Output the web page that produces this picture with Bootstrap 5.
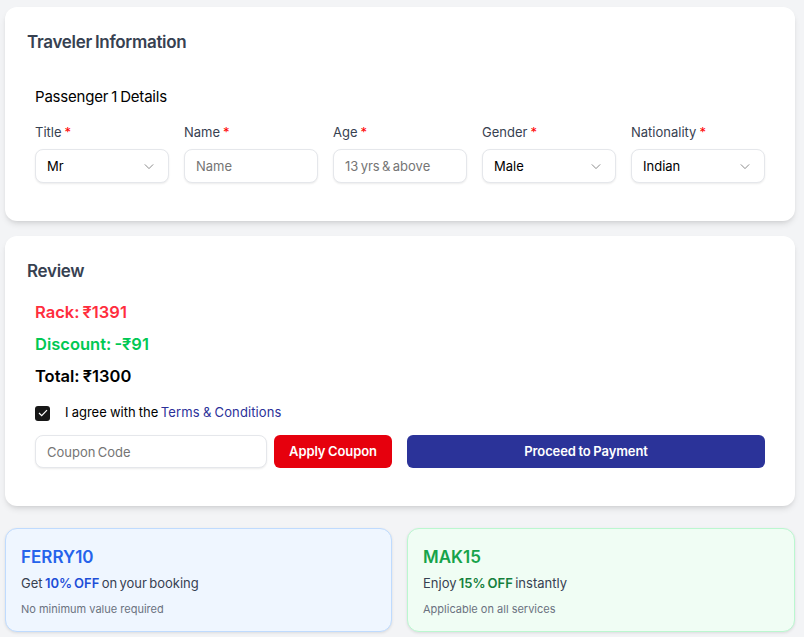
<!DOCTYPE html>
<html lang="en">
<head>
<meta charset="utf-8">
<title>Booking</title>
<link href="https://cdn.jsdelivr.net/npm/bootstrap@5.3.0/dist/css/bootstrap.min.css" rel="stylesheet">
<style>
html,body{height:637px;overflow:hidden}
body{background:#f3f4f6;font-family:Inter,"Noto Sans",sans-serif;color:#000;padding:7px 9px 0 5px}
.panel{background:#fff;border-radius:12px;box-shadow:0 4px 6px -1px rgba(0,0,0,.1),0 2px 4px -2px rgba(0,0,0,.1)}
.panel-a{height:214px;padding:24px 30px 0 22px;margin-bottom:15px}
.panel-b{height:270px;padding:24px 30px 0 22px;margin-bottom:22px}
.panel-title{font-size:17px;font-weight:600;color:#374151;line-height:22px;margin:0;letter-spacing:-.3px;word-spacing:-1px}
.sub-block{padding-left:8px}
.passenger{font-size:15px;line-height:20px;margin:34px 0 16px;letter-spacing:-.2px;word-spacing:-1px}
.field-grid{display:grid;grid-template-columns:repeat(5,134px);gap:15px}
.field-label{display:block;font-size:13px;line-height:18px;color:#374151;margin-bottom:8px}
.req{color:#f00;margin-left:3px}
.field-box{height:34px;width:100%;font-family:inherit;font-size:13px;padding:0 11px;border:1px solid #e5e7eb;border-radius:8px;box-shadow:0 1px 2px rgba(0,0,0,.08);color:#000;background:#fff;outline:0;word-spacing:-1.3px}
.field-box::placeholder{color:#757575;opacity:1}
.field-select{display:flex;align-items:center;justify-content:space-between}
.field-select span{padding-top:1px}
.field-select svg{width:10px;height:7px;margin-right:3.5px;flex:none}
.price-line{font-size:16.5px;font-weight:600;line-height:24px;margin:0 0 8px;word-spacing:-1px}
.price-rack{color:#ff2d3d}.price-disc{color:#00c853}
.first-price{margin-top:18px}
.agree{display:flex;align-items:center;height:16px;margin:17px 0 14px;font-size:13px;word-spacing:-.5px}
.tick{width:15px;height:15px;border-radius:3px;background:#171717;display:flex;align-items:center;justify-content:center;margin-right:15px;flex:none}
.tick svg{width:10px;height:8px}
.agree a{color:#2b3199;text-decoration:none;margin-left:2.5px;letter-spacing:.1px}
.action-row{display:flex;height:33px}
.coupon{width:232px;height:33px;margin-right:7px}
.btn-apply,.btn-pay{height:33px;border:0;border-radius:6px;color:#fff;font-size:13px;font-weight:600;padding:0;letter-spacing:-.1px;word-spacing:-.5px}
.btn-apply{width:118px;background:#e6000d;margin-right:15px}
.btn-pay{width:358px;background:#2b3399}
.btn-apply:hover{background:#e6000d;color:#fff}.btn-pay:hover{background:#2b3399;color:#fff}
.promo-row{display:grid;grid-template-columns:387px 388px;gap:15px}
.promo{height:104px;border-radius:12px;padding:17px 15px 0;box-shadow:0 1px 3px rgba(0,0,0,.1)}
.promo-blue{background:#eff6ff;border:1px solid #bfdbfe}
.promo-green{background:#f0fdf4;border:1px solid #bbf7d0}
.promo-code{font-size:17px;font-weight:600;line-height:22px;margin:0 0 6px}
.promo-blue .promo-code{color:#2563eb}.promo-green .promo-code{color:#16a34a}
.promo-text{font-size:13px;line-height:18px;color:#374151;margin:0 0 9px;word-spacing:-1.3px}
.promo-text b{font-weight:600}
.promo-blue b{color:#1d4ed8}.promo-green b{color:#15803d}
.promo-note{font-size:11px;line-height:16px;color:#6b7280;margin:0}
</style>
</head>
<body>
<section class="panel panel-a">
  <h2 class="panel-title">Traveler Information</h2>
  <div class="sub-block">
    <p class="passenger">Passenger 1 Details</p>
    <div class="field-grid">
      <div><label class="field-label">Title<span class="req">*</span></label><div class="field-box field-select"><span>Mr</span><svg viewBox="0 0 12 8" fill="none" stroke="#808080" stroke-width="1.1"><path d="M1 1.5 6 6.5l5-5"/></svg></div></div>
      <div><label class="field-label">Name<span class="req">*</span></label><input class="field-box" placeholder="Name"></div>
      <div><label class="field-label">Age<span class="req">*</span></label><input class="field-box" placeholder="13 yrs &amp; above"></div>
      <div><label class="field-label">Gender<span class="req">*</span></label><div class="field-box field-select"><span>Male</span><svg viewBox="0 0 12 8" fill="none" stroke="#808080" stroke-width="1.1"><path d="M1 1.5 6 6.5l5-5"/></svg></div></div>
      <div><label class="field-label">Nationality<span class="req">*</span></label><div class="field-box field-select"><span>Indian</span><svg viewBox="0 0 12 8" fill="none" stroke="#808080" stroke-width="1.1"><path d="M1 1.5 6 6.5l5-5"/></svg></div></div>
    </div>
  </div>
</section>
<section class="panel panel-b">
  <h2 class="panel-title">Review</h2>
  <div class="sub-block">
    <p class="price-line price-rack first-price">Rack: ₹1391</p>
    <p class="price-line price-disc">Discount: -₹91</p>
    <p class="price-line">Total: ₹1300</p>
    <div class="agree"><span class="tick"><svg viewBox="0 0 10 8" fill="none" stroke="#fff" stroke-width="1.2"><path d="M1 4l2.7 2.7L9 1.2"/></svg></span>I agree with the <a href="#">Terms &amp; Conditions</a></div>
    <div class="action-row">
      <input class="field-box coupon" placeholder="Coupon Code">
      <button class="btn btn-apply">Apply Coupon</button>
      <button class="btn btn-pay">Proceed to Payment</button>
    </div>
  </div>
</section>
<div class="promo-row">
  <div class="promo promo-blue"><p class="promo-code">FERRY10</p><p class="promo-text">Get <b>10% OFF</b> on your booking</p><p class="promo-note">No minimum value required</p></div>
  <div class="promo promo-green"><p class="promo-code">MAK15</p><p class="promo-text">Enjoy <b>15% OFF</b> instantly</p><p class="promo-note">Applicable on all services</p></div>
</div>
<script src="https://cdn.jsdelivr.net/npm/bootstrap@5.3.0/dist/js/bootstrap.bundle.min.js"></script>
</body>
</html>
